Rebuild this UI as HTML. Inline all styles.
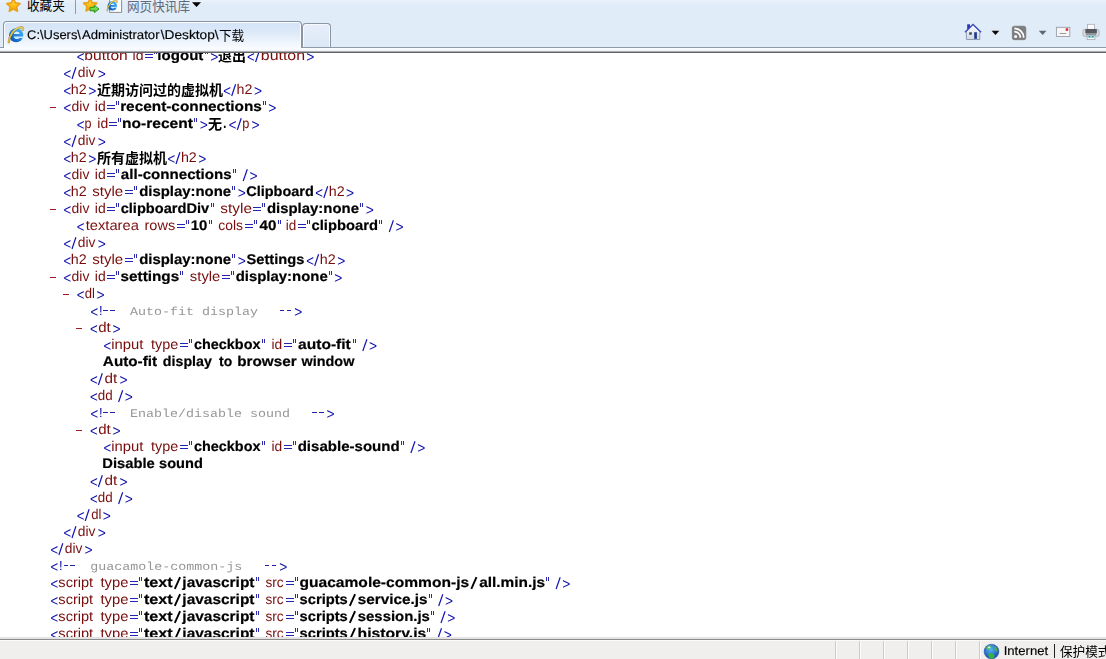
<!DOCTYPE html>
<html lang="zh"><head><meta charset="utf-8"><title>XML view</title>
<style>
html,body{margin:0;padding:0}
html{overflow:hidden;width:1106px;height:659px}
body{width:1106px;height:659px;overflow:hidden;background:#fff;position:relative;font-family:"Liberation Sans",sans-serif}
#top{position:absolute;left:0;top:0;width:1106px;height:47px;background:linear-gradient(#eaf1fb 0,#e3edf9 3px,#e0ecf8 5px,#e0ecf8 100%)}
#l47{position:absolute;left:0;top:47px;width:1106px;height:1px;background:#8f9aaa}
#band{position:absolute;left:0;top:48px;width:1106px;height:3px;background:linear-gradient(#fbfdff,#f1f5fa)}
#l51{position:absolute;left:0;top:51px;width:1106px;height:1px;background:#a9abae}
#l52{position:absolute;left:0;top:52px;width:1106px;height:1px;background:#636465}
#tab{position:absolute;left:3px;top:21px;width:297px;height:26px;border:1px solid #8a94a2;border-bottom:0;border-radius:4px 4px 0 0;
 background:linear-gradient(#d3e3f8 0,#dde9f9 40%,#f2f7fd 85%,#f8fbff 100%);box-shadow:inset 1px 1px 0 #fafdff,inset -1px 0 0 #fafdff}
#ntab{position:absolute;left:302px;top:23px;width:27px;height:23px;border:1px solid #8d96a3;border-bottom:0;border-radius:4px 4px 0 0;
 background:linear-gradient(#e6eefa,#dce8f6);box-shadow:inset 1px 1px 0 #f6faff,inset -1px 0 0 #f6faff}
.sep{position:absolute;left:75px;top:0;width:1px;height:14px;background:#8f9bab}
#view{position:absolute;left:0;top:53px;width:1106px;height:584px;overflow:hidden;background:#fff}
#doc{position:absolute;left:0;top:-53px;width:1106px;height:700px}
.ln{will-change:transform;position:absolute;left:0;width:1106px;height:17px;line-height:17px;font-size:14px;white-space:pre}
.k{text-rendering:geometricPrecision;position:absolute;top:0;left:0;transform-origin:0 0;white-space:pre;line-height:17px}
.m{color:#0a0aa8;font-size:15.5px;top:2.00px}
.t{color:#780c0c;top:0.00px}
.b{color:#000;font-weight:bold;-webkit-text-stroke:0.2px #000;top:0.00px}
.c{color:#969696;font-family:"Liberation Mono",monospace;font-size:13.33px;top:2px;transform:scaleY(0.87);transform-origin:0 13px}
.eq{position:absolute;top:7px;width:8px;height:1px;background:#2222b4}
.e2{top:10px}
.qt{position:absolute;top:3px;width:1px;height:4px;background:#2828a8}
.x{top:0!important;font-size:13px!important}
.ds{position:absolute;top:8px;width:4.9px;height:1px;background:#2020a8}
.ui{color:#000;font-size:12.6px;-webkit-text-stroke:0.15px #000}
.mn{position:absolute;top:9px;width:6px;height:1px;background:#a0182c}
.g{position:absolute;overflow:visible}
#status{position:absolute;left:0;top:637px;width:1106px;height:22px;background:#f0efee}
#status .r1{position:absolute;left:0;top:0;width:100%;height:2px;background:#e3e3e3}
#status .r2{position:absolute;left:0;top:2px;width:100%;height:1px;background:#8b8b8b}
#status .r3{position:absolute;left:0;top:3px;width:100%;height:1px;background:#fbfbfb}
.dv{position:absolute;top:4px;width:1px;height:18px;background:#cbcbcb;box-shadow:1px 0 0 #fcfcfc}
.abs{position:absolute}
.cj{font-family:"Liberation Sans","Noto Sans CJK SC",sans-serif}
</style></head>
<body>
<div id="top"></div>
<div id="l47"></div><div id="band"></div><div id="l51"></div><div id="l52"></div>
<div class="sep"></div>
<svg width="0" height="0" style="position:absolute"><defs>
<linearGradient id="gStar" x1="0" y1="0" x2="0" y2="1"><stop offset="0" stop-color="#ffe45a"/><stop offset=".5" stop-color="#ffc21a"/><stop offset="1" stop-color="#f39a00"/></linearGradient>
<linearGradient id="gIE" x1="1" y1="0" x2="0" y2="1"><stop offset="0" stop-color="#4fc0ff"/><stop offset=".5" stop-color="#1f86e0"/><stop offset="1" stop-color="#0b3f9a"/></linearGradient>
<linearGradient id="gGold" x1="0" y1="1" x2="1" y2="0"><stop offset="0" stop-color="#e9a820"/><stop offset=".6" stop-color="#f3d24a"/><stop offset="1" stop-color="#d9c25a"/></linearGradient>
<radialGradient id="gGlobe" cx=".45" cy=".35" r=".7"><stop offset="0" stop-color="#58b6f2"/><stop offset=".6" stop-color="#2a6fd0"/><stop offset="1" stop-color="#1b3f9c"/></radialGradient>
<linearGradient id="gGreen" x1="0" y1="0" x2="0" y2="1"><stop offset="0" stop-color="#a8f070"/><stop offset="1" stop-color="#3fbf2a"/></linearGradient>
<linearGradient id="gWall" x1="0" y1="0" x2="0" y2="1"><stop offset="0" stop-color="#fdfdfe"/><stop offset="1" stop-color="#cfd6e4"/></linearGradient>
</defs></svg><svg class="g" style="left:0;top:0" width="210" height="20" viewBox="0 0 210 20"><polygon points="13.40,-1.20 15.40,2.95 19.96,3.57 16.63,6.75 17.46,11.28 13.40,9.10 9.34,11.28 10.17,6.75 6.84,3.57 11.40,2.95" fill="url(#gStar)" stroke="#eaa21a" stroke-width="1.7" stroke-linejoin="round"/><polygon points="90.20,-1.60 92.20,2.55 96.76,3.17 93.43,6.35 94.26,10.88 90.20,8.70 86.14,10.88 86.97,6.35 83.64,3.17 88.20,2.55" fill="url(#gStar)" stroke="#eaa21a" stroke-width="1.7" stroke-linejoin="round"/><path d="M90 7.4H94.4V5.4L99 9L94.4 12.6V10.8H90Z" fill="url(#gGreen)" stroke="#2a9a1a" stroke-width="1" stroke-linejoin="round"/><path d="M109.6 -3H118.5L121.6 0.4V12.4H109.6Z" fill="#fdfdfd" stroke="#8c8c8c" stroke-width="1"/><circle cx="112.3" cy="5.9" r="4.7" fill="url(#gIE)"/><path d="M110.69 5.09 C110.96 2.95 114.31 2.81 114.58 5.09Z" fill="#d8efff"/><path d="M110.55 6.71 L117.27 6.71 L117.13 7.71 L114.58 7.78 C113.64 8.85 111.09 8.72 110.55 6.71Z" fill="#cfeaff"/><path d="M107.33 10.60 C107.33 7.11 110.55 1.07 115.52 0.53 C116.66 0.46 117.20 1.33 116.66 2.34" fill="none" stroke="#6b5a14" stroke-width="1.68" stroke-linecap="round" opacity=".45"/><path d="M107.33 10.60 C107.33 7.11 110.55 1.07 115.52 0.53 C116.66 0.46 117.20 1.33 116.66 2.34" fill="none" stroke="url(#gGold)" stroke-width="1.07" stroke-linecap="round"/><path d="M192 2.2H201L196.5 6.9Z" fill="#000"/></svg>
<svg class="g " style="left:26.60px;top:-3.10px" width="38" height="17" viewBox="0 -12.6 38 17"><text class="cj" x="0" y="0" font-size="12.6" fill="#000">收藏夹</text></svg>
<svg class="g " style="left:126.60px;top:-2.40px" width="62" height="17" viewBox="0 -12.6 62 17"><text class="cj" x="0" y="0" font-size="12.6" fill="#5f6a7a">网页快讯库</text></svg>
<div id="tab"></div>
<div id="ntab"></div>
<svg class="g" style="left:0;top:20px" width="30" height="30" viewBox="0 20 30 30"><circle cx="16.2" cy="35.2" r="7.0" fill="url(#gIE)"/><path d="M13.80 34.00 C14.20 30.80 19.20 30.60 19.60 34.00Z" fill="#d8efff"/><path d="M13.60 36.40 L23.60 36.40 L23.40 37.90 L19.60 38.00 C18.20 39.60 14.40 39.40 13.60 36.40Z" fill="#cfeaff"/><path d="M8.80 42.20 C8.80 37.00 13.60 28.00 21.00 27.20 C22.70 27.10 23.50 28.40 22.70 29.90" fill="none" stroke="#6b5a14" stroke-width="2.50" stroke-linecap="round" opacity=".45"/><path d="M8.80 42.20 C8.80 37.00 13.60 28.00 21.00 27.20 C22.70 27.10 23.50 28.40 22.70 29.90" fill="none" stroke="url(#gGold)" stroke-width="1.60" stroke-linecap="round"/></svg>
<div class="ln" style="top:26.6px;line-height:17px"><span class="k ui" style="transform:matrix(1.0259,0,0,1,27.09,0)">C:\Users\</span><span class="k ui" style="transform:matrix(1.0464,0,0,1,81.90,0)">Administrator</span><span class="k ui" style="transform:matrix(1.0889,0,0,1,160.70,0)">\Desktop\</span></div>
<svg class="g " style="left:218.90px;top:27.10px" width="26" height="17" viewBox="0 -12.6 26 17"><text class="cj" x="0" y="0" font-size="12.6" fill="#000">下载</text></svg>
<svg class="g" style="left:960px;top:20px" width="146" height="26" viewBox="960 20 146 26"><rect x="967.2" y="24.3" width="2.8" height="5" fill="#2b35b8"/><path d="M966.4 31.6L973 25.2L979.8 31.6V39.5H966.4Z" fill="url(#gWall)" stroke="#8a93a8" stroke-width="0.9"/><path d="M964.9 32.2L973 24.4L981.1 32.2" fill="none" stroke="#3a49c4" stroke-width="1.3" stroke-linejoin="miter"/><rect x="974.2" y="32.2" width="2.7" height="6.6" fill="#1f3a8a"/><rect x="969.2" y="32.3" width="2.6" height="2.4" fill="#3a4250"/><path d="M991.6 30.8H999.3L995.45 34.9Z" fill="#0a0a0a"/><rect x="1012.3" y="26.2" width="13.5" height="13.5" rx="2" fill="#7d7d7d" stroke="#6a6a6a" stroke-width="0.6"/><circle cx="1015.6" cy="36.5" r="1.5" fill="#fff"/><path d="M1014.3 31.6A6 6 0 0 1 1020.4 37.8" fill="none" stroke="#fff" stroke-width="1.7"/><path d="M1014.3 28.3A9.4 9.4 0 0 1 1023.7 37.8" fill="none" stroke="#fff" stroke-width="1.7"/><path d="M1038.8 30.8H1046.5L1042.65 35Z" fill="#5d6875"/><rect x="1056.4" y="27.3" width="13.4" height="9.2" fill="#f6f6f8" stroke="#9a9da6" stroke-width="0.9"/><rect x="1059.6" y="33" width="6.6" height="1" fill="#9a9a9a"/><rect x="1065.7" y="28.3" width="2.5" height="2.5" fill="#e0203a"/><rect x="1087.5" y="24.3" width="7.1" height="5.5" fill="#fbfbfd" stroke="#a9acb5" stroke-width="0.8"/><rect x="1083" y="29.4" width="16.1" height="7" rx="1.6" fill="#d9dce2" stroke="#9da1aa" stroke-width="0.7"/><rect x="1085.3" y="29" width="11.6" height="4.6" rx="0.8" fill="#55585e"/><rect x="1086" y="33.4" width="10.2" height="2" fill="#8d9096"/><rect x="1087.2" y="35.2" width="7.7" height="4.4" fill="#fbfbfd" stroke="#a9acb5" stroke-width="0.8"/><rect x="1088.4" y="35.8" width="5.3" height="1.8" fill="#1e9a94"/><rect x="1090.5" y="35.8" width="1.1" height="1.8" fill="#e8fbfa"/></svg>
<div id="view"><div id="doc">
<div class="ln" style="top:47.00px"><span class="k m" style="transform:matrix(0.8516,0,0,1,76.78,0)">&lt;</span><span class="k t" style="transform:matrix(1.1164,0,0,1,84.32,0)">button</span><span class="k t" style="transform:matrix(1.0070,0,0,1,132.52,0)">id</span><i class="eq" style="left:145px"></i><i class="eq e2" style="left:145px"></i><i class="qt" style="left:154px"></i><i class="qt" style="left:156px"></i><span class="k b" style="transform:matrix(1.0762,0,0,1,157.36,0)">logout</span><i class="qt" style="left:205px"></i><i class="qt" style="left:207px"></i><span class="k m" style="transform:matrix(0.8903,0,0,1,210.25,0)">&gt;</span><svg class="g " style="left:218.40px;top:-0.15px" width="30" height="18" viewBox="0 -13.9 30 18"><text class="cj" x="0" y="0" font-size="14" font-weight="bold" fill="#000">退出</text></svg><span class="k m" style="transform:matrix(0.8516,0,0,1,247.08,0)">&lt;</span><svg class="g" style="left:0;top:0" width="600" height="17"><line x1="255.6" y1="15" x2="259.5" y2="3.2" stroke="#1414b0" stroke-width="1.2"/></svg><span class="k t" style="transform:matrix(1.1379,0,0,1,260.80,0)">button</span><span class="k m" style="transform:matrix(0.8903,0,0,1,306.35,0)">&gt;</span></div>
<div class="ln" style="top:64.00px"><span class="k m" style="transform:matrix(0.8516,0,0,1,63.48,0)">&lt;</span><svg class="g" style="left:0;top:0" width="600" height="17"><line x1="72.0" y1="15" x2="75.9" y2="3.2" stroke="#1414b0" stroke-width="1.2"/></svg><span class="k t" style="transform:matrix(0.9852,0,0,1,77.87,0)">div</span><span class="k m" style="transform:matrix(0.8903,0,0,1,97.65,0)">&gt;</span></div>
<div class="ln" style="top:81.00px"><span class="k m" style="transform:matrix(0.8516,0,0,1,63.48,0)">&lt;</span><span class="k t" style="transform:matrix(1.0191,0,0,1,70.81,0)">h2</span><span class="k m" style="transform:matrix(0.8903,0,0,1,88.15,0)">&gt;</span><svg class="g " style="left:96.70px;top:-0.15px" width="128" height="18" viewBox="0 -13.9 128 18"><text class="cj" x="0" y="0" font-size="14" font-weight="bold" fill="#000">近期访问过的虚拟机</text></svg><span class="k m" style="transform:matrix(0.8516,0,0,1,223.18,0)">&lt;</span><svg class="g" style="left:0;top:0" width="600" height="17"><line x1="231.7" y1="15" x2="235.6" y2="3.2" stroke="#1414b0" stroke-width="1.2"/></svg><span class="k t" style="transform:matrix(1.0191,0,0,1,236.61,0)">h2</span><span class="k m" style="transform:matrix(0.8903,0,0,1,253.95,0)">&gt;</span></div>
<div class="ln" style="top:98.00px"><i class="mn" style="left:50px"></i><span class="k m" style="transform:matrix(0.8516,0,0,1,63.48,0)">&lt;</span><span class="k t" style="transform:matrix(0.9966,0,0,1,71.56,0)">div</span><span class="k t" style="transform:matrix(0.9962,0,0,1,94.83,0)">id</span><i class="eq" style="left:107px"></i><i class="eq e2" style="left:107px"></i><i class="qt" style="left:116px"></i><i class="qt" style="left:118px"></i><span class="k b" style="transform:matrix(1.0971,0,0,1,120.14,0)">recent-connections</span><i class="qt" style="left:263px"></i><i class="qt" style="left:265px"></i><span class="k m" style="transform:matrix(0.8903,0,0,1,268.25,0)">&gt;</span></div>
<div class="ln" style="top:115.00px"><span class="k m" style="transform:matrix(0.8516,0,0,1,76.68,0)">&lt;</span><span class="k t" style="transform:matrix(0.8985,0,0,1,84.41,0)">p</span><span class="k t" style="transform:matrix(0.9962,0,0,1,97.33,0)">id</span><i class="eq" style="left:109px"></i><i class="eq e2" style="left:109px"></i><i class="qt" style="left:118px"></i><i class="qt" style="left:120px"></i><span class="k b" style="transform:matrix(1.1107,0,0,1,122.03,0)">no-recent</span><i class="qt" style="left:194px"></i><i class="qt" style="left:196px"></i><span class="k m" style="transform:matrix(0.8903,0,0,1,199.75,0)">&gt;</span><svg class="g " style="left:208.40px;top:-0.15px" width="16" height="18" viewBox="0 -13.9 16 18"><text class="cj" x="0" y="0" font-size="14" font-weight="bold" fill="#000">无</text></svg><span class="k b" style="transform:matrix(0.7771,0,0,1,223.22,0)">.</span><span class="k m" style="transform:matrix(0.8516,0,0,1,228.78,0)">&lt;</span><svg class="g" style="left:0;top:0" width="600" height="17"><line x1="237.3" y1="15" x2="241.2" y2="3.2" stroke="#1414b0" stroke-width="1.2"/></svg><span class="k t" style="transform:matrix(0.9143,0,0,1,242.30,0)">p</span><span class="k m" style="transform:matrix(0.8903,0,0,1,251.55,0)">&gt;</span></div>
<div class="ln" style="top:132.00px"><span class="k m" style="transform:matrix(0.8516,0,0,1,63.48,0)">&lt;</span><svg class="g" style="left:0;top:0" width="600" height="17"><line x1="72.0" y1="15" x2="75.9" y2="3.2" stroke="#1414b0" stroke-width="1.2"/></svg><span class="k t" style="transform:matrix(0.9852,0,0,1,77.87,0)">div</span><span class="k m" style="transform:matrix(0.8903,0,0,1,97.65,0)">&gt;</span></div>
<div class="ln" style="top:149.00px"><span class="k m" style="transform:matrix(0.8516,0,0,1,63.48,0)">&lt;</span><span class="k t" style="transform:matrix(1.0191,0,0,1,70.81,0)">h2</span><span class="k m" style="transform:matrix(0.8903,0,0,1,88.15,0)">&gt;</span><svg class="g " style="left:96.70px;top:-0.15px" width="72" height="18" viewBox="0 -13.9 72 18"><text class="cj" x="0" y="0" font-size="14" font-weight="bold" fill="#000">所有虚拟机</text></svg><span class="k m" style="transform:matrix(0.8516,0,0,1,167.48,0)">&lt;</span><svg class="g" style="left:0;top:0" width="600" height="17"><line x1="176.0" y1="15" x2="179.9" y2="3.2" stroke="#1414b0" stroke-width="1.2"/></svg><span class="k t" style="transform:matrix(1.0191,0,0,1,180.91,0)">h2</span><span class="k m" style="transform:matrix(0.8903,0,0,1,198.25,0)">&gt;</span></div>
<div class="ln" style="top:166.00px"><span class="k m" style="transform:matrix(0.8516,0,0,1,63.48,0)">&lt;</span><span class="k t" style="transform:matrix(0.9966,0,0,1,71.56,0)">div</span><span class="k t" style="transform:matrix(0.9962,0,0,1,94.83,0)">id</span><i class="eq" style="left:107px"></i><i class="eq e2" style="left:107px"></i><i class="qt" style="left:116px"></i><i class="qt" style="left:118px"></i><span class="k b" style="transform:matrix(1.0785,0,0,1,120.86,0)">all-connections</span><i class="qt" style="left:233px"></i><i class="qt" style="left:235px"></i><svg class="g" style="left:0;top:0" width="600" height="17"><line x1="243.2" y1="15" x2="247.3" y2="3.2" stroke="#1414b0" stroke-width="1.2"/></svg><span class="k m" style="transform:matrix(0.8903,0,0,1,249.45,0)">&gt;</span></div>
<div class="ln" style="top:183.00px"><span class="k m" style="transform:matrix(0.8516,0,0,1,63.48,0)">&lt;</span><span class="k t" style="transform:matrix(1.0191,0,0,1,70.81,0)">h2</span><span class="k t" style="transform:matrix(1.0750,0,0,1,92.26,0)">style</span><i class="eq" style="left:125px"></i><i class="eq e2" style="left:125px"></i><i class="qt" style="left:134px"></i><i class="qt" style="left:136px"></i><span class="k b" style="transform:matrix(1.0648,0,0,1,139.13,0)">display:none</span><i class="qt" style="left:232px"></i><i class="qt" style="left:234px"></i><span class="k m" style="transform:matrix(0.8903,0,0,1,237.85,0)">&gt;</span><span class="k b" style="transform:matrix(1.0328,0,0,1,246.25,0)">Clipboard</span><span class="k m" style="transform:matrix(0.8516,0,0,1,315.28,0)">&lt;</span><svg class="g" style="left:0;top:0" width="600" height="17"><line x1="323.8" y1="15" x2="327.7" y2="3.2" stroke="#1414b0" stroke-width="1.2"/></svg><span class="k t" style="transform:matrix(1.0191,0,0,1,328.81,0)">h2</span><span class="k m" style="transform:matrix(0.8903,0,0,1,346.05,0)">&gt;</span></div>
<div class="ln" style="top:200.00px"><i class="mn" style="left:50px"></i><span class="k m" style="transform:matrix(0.8516,0,0,1,63.48,0)">&lt;</span><span class="k t" style="transform:matrix(0.9966,0,0,1,71.56,0)">div</span><span class="k t" style="transform:matrix(0.9962,0,0,1,94.83,0)">id</span><i class="eq" style="left:107px"></i><i class="eq e2" style="left:107px"></i><i class="qt" style="left:116px"></i><i class="qt" style="left:118px"></i><span class="k b" style="transform:matrix(1.0433,0,0,1,120.64,0)">clipboardDiv</span><i class="qt" style="left:211px"></i><i class="qt" style="left:213px"></i><span class="k t" style="transform:matrix(1.0964,0,0,1,220.36,0)">style</span><i class="eq" style="left:253px"></i><i class="eq e2" style="left:253px"></i><i class="qt" style="left:262px"></i><i class="qt" style="left:264px"></i><span class="k b" style="transform:matrix(1.0659,0,0,1,266.93,0)">display:none</span><i class="qt" style="left:360px"></i><i class="qt" style="left:362px"></i><span class="k m" style="transform:matrix(0.8903,0,0,1,365.65,0)">&gt;</span></div>
<div class="ln" style="top:217.00px"><span class="k m" style="transform:matrix(0.8516,0,0,1,76.68,0)">&lt;</span><span class="k t" style="transform:matrix(1.0498,0,0,1,85.70,0)">textarea</span><span class="k t" style="transform:matrix(1.0373,0,0,1,144.49,0)">rows</span><i class="eq" style="left:177px"></i><i class="eq e2" style="left:177px"></i><i class="qt" style="left:186px"></i><i class="qt" style="left:188px"></i><span class="k b" style="transform:matrix(1.0687,0,0,1,190.76,0)">10</span><i class="qt" style="left:209px"></i><i class="qt" style="left:211px"></i><span class="k t" style="transform:matrix(0.9908,0,0,1,218.37,0)">cols</span><i class="eq" style="left:245px"></i><i class="eq e2" style="left:245px"></i><i class="qt" style="left:254px"></i><i class="qt" style="left:256px"></i><span class="k b" style="transform:matrix(1.0796,0,0,1,259.50,0)">40</span><i class="qt" style="left:278px"></i><i class="qt" style="left:280px"></i><span class="k t" style="transform:matrix(0.9637,0,0,1,285.86,0)">id</span><i class="eq" style="left:298px"></i><i class="eq e2" style="left:298px"></i><i class="qt" style="left:307px"></i><i class="qt" style="left:309px"></i><span class="k b" style="transform:matrix(1.0539,0,0,1,311.54,0)">clipboard</span><i class="qt" style="left:379px"></i><i class="qt" style="left:381px"></i><svg class="g" style="left:0;top:0" width="600" height="17"><line x1="389.3" y1="15" x2="393.4" y2="3.2" stroke="#1414b0" stroke-width="1.2"/></svg><span class="k m" style="transform:matrix(0.8903,0,0,1,395.55,0)">&gt;</span></div>
<div class="ln" style="top:234.00px"><span class="k m" style="transform:matrix(0.8516,0,0,1,63.48,0)">&lt;</span><svg class="g" style="left:0;top:0" width="600" height="17"><line x1="72.0" y1="15" x2="75.9" y2="3.2" stroke="#1414b0" stroke-width="1.2"/></svg><span class="k t" style="transform:matrix(0.9852,0,0,1,77.87,0)">div</span><span class="k m" style="transform:matrix(0.8903,0,0,1,97.65,0)">&gt;</span></div>
<div class="ln" style="top:251.00px"><span class="k m" style="transform:matrix(0.8516,0,0,1,63.48,0)">&lt;</span><span class="k t" style="transform:matrix(1.0191,0,0,1,70.81,0)">h2</span><span class="k t" style="transform:matrix(1.0750,0,0,1,92.26,0)">style</span><i class="eq" style="left:125px"></i><i class="eq e2" style="left:125px"></i><i class="qt" style="left:134px"></i><i class="qt" style="left:136px"></i><span class="k b" style="transform:matrix(1.0648,0,0,1,139.13,0)">display:none</span><i class="qt" style="left:232px"></i><i class="qt" style="left:234px"></i><span class="k m" style="transform:matrix(0.8903,0,0,1,237.85,0)">&gt;</span><span class="k b" style="transform:matrix(1.0470,0,0,1,246.47,0)">Settings</span><span class="k m" style="transform:matrix(0.8516,0,0,1,306.18,0)">&lt;</span><svg class="g" style="left:0;top:0" width="600" height="17"><line x1="314.7" y1="15" x2="318.6" y2="3.2" stroke="#1414b0" stroke-width="1.2"/></svg><span class="k t" style="transform:matrix(1.0191,0,0,1,319.71,0)">h2</span><span class="k m" style="transform:matrix(0.8903,0,0,1,337.15,0)">&gt;</span></div>
<div class="ln" style="top:268.00px"><i class="mn" style="left:50px"></i><span class="k m" style="transform:matrix(0.8516,0,0,1,63.48,0)">&lt;</span><span class="k t" style="transform:matrix(0.9966,0,0,1,71.56,0)">div</span><span class="k t" style="transform:matrix(0.9962,0,0,1,94.83,0)">id</span><i class="eq" style="left:107px"></i><i class="eq e2" style="left:107px"></i><i class="qt" style="left:116px"></i><i class="qt" style="left:118px"></i><span class="k b" style="transform:matrix(1.0936,0,0,1,120.52,0)">settings</span><i class="qt" style="left:180px"></i><i class="qt" style="left:182px"></i><span class="k t" style="transform:matrix(1.0571,0,0,1,189.87,0)">style</span><i class="eq" style="left:222px"></i><i class="eq e2" style="left:222px"></i><i class="qt" style="left:231px"></i><i class="qt" style="left:233px"></i><span class="k b" style="transform:matrix(1.0648,0,0,1,235.73,0)">display:none</span><i class="qt" style="left:329px"></i><i class="qt" style="left:331px"></i><span class="k m" style="transform:matrix(0.8903,0,0,1,334.35,0)">&gt;</span></div>
<div class="ln" style="top:285.00px"><i class="mn" style="left:63px"></i><span class="k m" style="transform:matrix(0.8516,0,0,1,76.68,0)">&lt;</span><span class="k t" style="transform:matrix(0.9333,0,0,1,84.79,0)">dl</span><span class="k m" style="transform:matrix(0.8903,0,0,1,96.45,0)">&gt;</span></div>
<div class="ln" style="top:302.00px"><span class="k m" style="transform:matrix(0.8516,0,0,1,90.38,0)">&lt;</span><span class="k m x" style="transform:translateX(98.9px)">!</span><i class="ds" style="left:103.3px"></i><i class="ds" style="left:110.2px"></i><span class="k c" style="transform:matrix(1,0,0,.87,130.00,0)">Auto-fit display</span><i class="ds" style="left:279.6px"></i><i class="ds" style="left:286.5px"></i><span class="k m" style="transform:matrix(0.8903,0,0,1,294.35,0)">&gt;</span></div>
<div class="ln" style="top:319.00px"><i class="mn" style="left:76px"></i><span class="k m" style="transform:matrix(0.8516,0,0,1,89.88,0)">&lt;</span><span class="k t" style="transform:matrix(1.0721,0,0,1,98.13,0)">dt</span><span class="k m" style="transform:matrix(0.8903,0,0,1,112.55,0)">&gt;</span></div>
<div class="ln" style="top:336.00px"><span class="k m" style="transform:matrix(0.8516,0,0,1,103.58,0)">&lt;</span><span class="k t" style="transform:matrix(1.0599,0,0,1,111.27,0)">input</span><span class="k t" style="transform:matrix(1.0311,0,0,1,150.90,0)">type</span><i class="eq" style="left:180px"></i><i class="eq e2" style="left:180px"></i><i class="qt" style="left:189px"></i><i class="qt" style="left:191px"></i><span class="k b" style="transform:matrix(1.0306,0,0,1,193.95,0)">checkbox</span><i class="qt" style="left:262px"></i><i class="qt" style="left:264px"></i><span class="k t" style="transform:matrix(0.9853,0,0,1,271.44,0)">id</span><i class="eq" style="left:284px"></i><i class="eq e2" style="left:284px"></i><i class="qt" style="left:293px"></i><i class="qt" style="left:295px"></i><span class="k b" style="transform:matrix(1.1116,0,0,1,298.06,0)">auto-fit</span><i class="qt" style="left:353px"></i><i class="qt" style="left:355px"></i><svg class="g" style="left:0;top:0" width="600" height="17"><line x1="362.8" y1="15" x2="366.9" y2="3.2" stroke="#1414b0" stroke-width="1.2"/></svg><span class="k m" style="transform:matrix(0.8903,0,0,1,369.05,0)">&gt;</span></div>
<div class="ln" style="top:353.00px"><span class="k b" style="transform:matrix(1.0897,0,0,1,102.86,0)">Auto-fit</span><span class="k b" style="transform:matrix(1.0148,0,0,1,162.86,0)">display</span><span class="k b" style="transform:matrix(0.9956,0,0,1,219.10,0)">to</span><span class="k b" style="transform:matrix(1.0920,0,0,1,237.14,0)">browser</span><span class="k b" style="transform:matrix(1.0293,0,0,1,301.53,0)">window</span></div>
<div class="ln" style="top:370.00px"><span class="k m" style="transform:matrix(0.8516,0,0,1,89.88,0)">&lt;</span><svg class="g" style="left:0;top:0" width="600" height="17"><line x1="98.4" y1="15" x2="102.3" y2="3.2" stroke="#1414b0" stroke-width="1.2"/></svg><span class="k t" style="transform:matrix(1.0898,0,0,1,104.42,0)">dt</span><span class="k m" style="transform:matrix(0.8903,0,0,1,119.45,0)">&gt;</span></div>
<div class="ln" style="top:387.00px"><span class="k m" style="transform:matrix(0.8516,0,0,1,89.88,0)">&lt;</span><span class="k t" style="transform:matrix(0.9548,0,0,1,97.78,0)">dd</span><svg class="g" style="left:0;top:0" width="600" height="17"><line x1="118.6" y1="15" x2="122.7" y2="3.2" stroke="#1414b0" stroke-width="1.2"/></svg><span class="k m" style="transform:matrix(0.8903,0,0,1,124.85,0)">&gt;</span></div>
<div class="ln" style="top:404.00px"><span class="k m" style="transform:matrix(0.8516,0,0,1,90.38,0)">&lt;</span><span class="k m x" style="transform:translateX(98.9px)">!</span><i class="ds" style="left:103.3px"></i><i class="ds" style="left:110.2px"></i><span class="k c" style="transform:matrix(1,0,0,.87,130.00,0)">Enable/disable sound</span><i class="ds" style="left:311.8px"></i><i class="ds" style="left:318.7px"></i><span class="k m" style="transform:matrix(0.8903,0,0,1,326.55,0)">&gt;</span></div>
<div class="ln" style="top:421.00px"><i class="mn" style="left:76px"></i><span class="k m" style="transform:matrix(0.8516,0,0,1,89.88,0)">&lt;</span><span class="k t" style="transform:matrix(1.0721,0,0,1,98.13,0)">dt</span><span class="k m" style="transform:matrix(0.8903,0,0,1,112.55,0)">&gt;</span></div>
<div class="ln" style="top:438.00px"><span class="k m" style="transform:matrix(0.8516,0,0,1,103.58,0)">&lt;</span><span class="k t" style="transform:matrix(1.0599,0,0,1,111.27,0)">input</span><span class="k t" style="transform:matrix(1.0311,0,0,1,150.90,0)">type</span><i class="eq" style="left:180px"></i><i class="eq e2" style="left:180px"></i><i class="qt" style="left:189px"></i><i class="qt" style="left:191px"></i><span class="k b" style="transform:matrix(1.0306,0,0,1,193.95,0)">checkbox</span><i class="qt" style="left:262px"></i><i class="qt" style="left:264px"></i><span class="k t" style="transform:matrix(0.9853,0,0,1,271.44,0)">id</span><i class="eq" style="left:284px"></i><i class="eq e2" style="left:284px"></i><i class="qt" style="left:293px"></i><i class="qt" style="left:295px"></i><span class="k b" style="transform:matrix(1.0752,0,0,1,297.63,0)">disable-sound</span><i class="qt" style="left:401px"></i><i class="qt" style="left:403px"></i><svg class="g" style="left:0;top:0" width="600" height="17"><line x1="410.9" y1="15" x2="415.0" y2="3.2" stroke="#1414b0" stroke-width="1.2"/></svg><span class="k m" style="transform:matrix(0.8903,0,0,1,417.15,0)">&gt;</span></div>
<div class="ln" style="top:455.00px"><span class="k b" style="transform:matrix(1.0520,0,0,1,102.28,0)">Disable</span><span class="k b" style="transform:matrix(1.0428,0,0,1,159.04,0)">sound</span></div>
<div class="ln" style="top:472.00px"><span class="k m" style="transform:matrix(0.8516,0,0,1,89.88,0)">&lt;</span><svg class="g" style="left:0;top:0" width="600" height="17"><line x1="98.4" y1="15" x2="102.3" y2="3.2" stroke="#1414b0" stroke-width="1.2"/></svg><span class="k t" style="transform:matrix(1.0898,0,0,1,104.42,0)">dt</span><span class="k m" style="transform:matrix(0.8903,0,0,1,119.45,0)">&gt;</span></div>
<div class="ln" style="top:489.00px"><span class="k m" style="transform:matrix(0.8516,0,0,1,89.88,0)">&lt;</span><span class="k t" style="transform:matrix(0.9548,0,0,1,97.78,0)">dd</span><svg class="g" style="left:0;top:0" width="600" height="17"><line x1="118.6" y1="15" x2="122.7" y2="3.2" stroke="#1414b0" stroke-width="1.2"/></svg><span class="k m" style="transform:matrix(0.8903,0,0,1,124.85,0)">&gt;</span></div>
<div class="ln" style="top:506.00px"><span class="k m" style="transform:matrix(0.8516,0,0,1,76.68,0)">&lt;</span><svg class="g" style="left:0;top:0" width="600" height="17"><line x1="85.2" y1="15" x2="89.1" y2="3.2" stroke="#1414b0" stroke-width="1.2"/></svg><span class="k t" style="transform:matrix(0.9333,0,0,1,91.19,0)">dl</span><span class="k m" style="transform:matrix(0.8903,0,0,1,102.85,0)">&gt;</span></div>
<div class="ln" style="top:523.00px"><span class="k m" style="transform:matrix(0.8516,0,0,1,63.48,0)">&lt;</span><svg class="g" style="left:0;top:0" width="600" height="17"><line x1="72.0" y1="15" x2="75.9" y2="3.2" stroke="#1414b0" stroke-width="1.2"/></svg><span class="k t" style="transform:matrix(0.9852,0,0,1,77.87,0)">div</span><span class="k m" style="transform:matrix(0.8903,0,0,1,97.65,0)">&gt;</span></div>
<div class="ln" style="top:540.00px"><span class="k m" style="transform:matrix(0.8516,0,0,1,50.38,0)">&lt;</span><svg class="g" style="left:0;top:0" width="600" height="17"><line x1="58.9" y1="15" x2="62.8" y2="3.2" stroke="#1414b0" stroke-width="1.2"/></svg><span class="k t" style="transform:matrix(0.9852,0,0,1,64.77,0)">div</span><span class="k m" style="transform:matrix(0.8903,0,0,1,84.55,0)">&gt;</span></div>
<div class="ln" style="top:557.00px"><span class="k m" style="transform:matrix(0.8516,0,0,1,50.58,0)">&lt;</span><span class="k m x" style="transform:translateX(59.1px)">!</span><i class="ds" style="left:63.5px"></i><i class="ds" style="left:70.4px"></i><span class="k c" style="transform:matrix(1,0,0,.87,90.20,0)">guacamole-common-js</span><i class="ds" style="left:264.6px"></i><i class="ds" style="left:271.5px"></i><span class="k m" style="transform:matrix(0.8903,0,0,1,279.35,0)">&gt;</span></div>
<div class="ln" style="top:574.00px"><span class="k m" style="transform:matrix(0.8516,0,0,1,50.38,0)">&lt;</span><span class="k t" style="transform:matrix(1.0397,0,0,1,58.37,0)">script</span><span class="k t" style="transform:matrix(1.0543,0,0,1,100.50,0)">type</span><i class="eq" style="left:130px"></i><i class="eq e2" style="left:130px"></i><i class="qt" style="left:139px"></i><i class="qt" style="left:141px"></i><span class="k b" style="transform:matrix(1.1519,0,0,1,143.90,0)">text</span><svg class="g" style="left:0;top:0" width="600" height="17"><line x1="174.8" y1="14.8" x2="180.1" y2="3.2" stroke="#000" stroke-width="1.9"/></svg><span class="k b" style="transform:matrix(1.1034,0,0,1,182.34,0)">javascript</span><i class="qt" style="left:256px"></i><i class="qt" style="left:258px"></i><span class="k t" style="transform:matrix(0.9712,0,0,1,265.49,0)">src</span><i class="eq" style="left:286px"></i><i class="eq e2" style="left:286px"></i><i class="qt" style="left:295px"></i><i class="qt" style="left:297px"></i><span class="k b" style="transform:matrix(1.1124,0,0,1,299.51,0)">guacamole-common-js</span><svg class="g" style="left:0;top:0" width="600" height="17"><line x1="471.3" y1="14.8" x2="476.5" y2="3.2" stroke="#000" stroke-width="1.9"/></svg><span class="k b" style="transform:matrix(1.0994,0,0,1,479.16,0)">all.min.js</span><i class="qt" style="left:546px"></i><i class="qt" style="left:548px"></i><svg class="g" style="left:0;top:0" width="600" height="17"><line x1="556.1" y1="15" x2="560.2" y2="3.2" stroke="#1414b0" stroke-width="1.2"/></svg><span class="k m" style="transform:matrix(0.8903,0,0,1,562.35,0)">&gt;</span></div>
<div class="ln" style="top:591.00px"><span class="k m" style="transform:matrix(0.8516,0,0,1,50.38,0)">&lt;</span><span class="k t" style="transform:matrix(1.0397,0,0,1,58.37,0)">script</span><span class="k t" style="transform:matrix(1.0543,0,0,1,100.50,0)">type</span><i class="eq" style="left:130px"></i><i class="eq e2" style="left:130px"></i><i class="qt" style="left:139px"></i><i class="qt" style="left:141px"></i><span class="k b" style="transform:matrix(1.1519,0,0,1,143.90,0)">text</span><svg class="g" style="left:0;top:0" width="600" height="17"><line x1="174.8" y1="14.8" x2="180.1" y2="3.2" stroke="#000" stroke-width="1.9"/></svg><span class="k b" style="transform:matrix(1.1034,0,0,1,182.34,0)">javascript</span><i class="qt" style="left:256px"></i><i class="qt" style="left:258px"></i><span class="k t" style="transform:matrix(0.9712,0,0,1,265.49,0)">src</span><i class="eq" style="left:286px"></i><i class="eq e2" style="left:286px"></i><i class="qt" style="left:295px"></i><i class="qt" style="left:297px"></i><span class="k b" style="transform:matrix(1.0511,0,0,1,299.54,0)">scripts</span><svg class="g" style="left:0;top:0" width="600" height="17"><line x1="349.8" y1="14.8" x2="355.1" y2="3.2" stroke="#000" stroke-width="1.9"/></svg><span class="k b" style="transform:matrix(1.0950,0,0,1,357.72,0)">service.js</span><i class="qt" style="left:429px"></i><i class="qt" style="left:431px"></i><svg class="g" style="left:0;top:0" width="600" height="17"><line x1="438.7" y1="15" x2="442.8" y2="3.2" stroke="#1414b0" stroke-width="1.2"/></svg><span class="k m" style="transform:matrix(0.8903,0,0,1,444.95,0)">&gt;</span></div>
<div class="ln" style="top:608.00px"><span class="k m" style="transform:matrix(0.8516,0,0,1,50.38,0)">&lt;</span><span class="k t" style="transform:matrix(1.0397,0,0,1,58.37,0)">script</span><span class="k t" style="transform:matrix(1.0543,0,0,1,100.50,0)">type</span><i class="eq" style="left:130px"></i><i class="eq e2" style="left:130px"></i><i class="qt" style="left:139px"></i><i class="qt" style="left:141px"></i><span class="k b" style="transform:matrix(1.1519,0,0,1,143.90,0)">text</span><svg class="g" style="left:0;top:0" width="600" height="17"><line x1="174.8" y1="14.8" x2="180.1" y2="3.2" stroke="#000" stroke-width="1.9"/></svg><span class="k b" style="transform:matrix(1.1034,0,0,1,182.34,0)">javascript</span><i class="qt" style="left:256px"></i><i class="qt" style="left:258px"></i><span class="k t" style="transform:matrix(0.9712,0,0,1,265.49,0)">src</span><i class="eq" style="left:286px"></i><i class="eq e2" style="left:286px"></i><i class="qt" style="left:295px"></i><i class="qt" style="left:297px"></i><span class="k b" style="transform:matrix(1.0511,0,0,1,299.54,0)">scripts</span><svg class="g" style="left:0;top:0" width="600" height="17"><line x1="349.8" y1="14.8" x2="355.1" y2="3.2" stroke="#000" stroke-width="1.9"/></svg><span class="k b" style="transform:matrix(1.0660,0,0,1,357.73,0)">session.js</span><i class="qt" style="left:431px"></i><i class="qt" style="left:433px"></i><svg class="g" style="left:0;top:0" width="600" height="17"><line x1="441.0" y1="15" x2="445.1" y2="3.2" stroke="#1414b0" stroke-width="1.2"/></svg><span class="k m" style="transform:matrix(0.8903,0,0,1,447.25,0)">&gt;</span></div>
<div class="ln" style="top:625.00px"><span class="k m" style="transform:matrix(0.8516,0,0,1,50.38,0)">&lt;</span><span class="k t" style="transform:matrix(1.0397,0,0,1,58.37,0)">script</span><span class="k t" style="transform:matrix(1.0543,0,0,1,100.50,0)">type</span><i class="eq" style="left:130px"></i><i class="eq e2" style="left:130px"></i><i class="qt" style="left:139px"></i><i class="qt" style="left:141px"></i><span class="k b" style="transform:matrix(1.1519,0,0,1,143.90,0)">text</span><svg class="g" style="left:0;top:0" width="600" height="17"><line x1="174.8" y1="14.8" x2="180.1" y2="3.2" stroke="#000" stroke-width="1.9"/></svg><span class="k b" style="transform:matrix(1.1034,0,0,1,182.34,0)">javascript</span><i class="qt" style="left:256px"></i><i class="qt" style="left:258px"></i><span class="k t" style="transform:matrix(0.9712,0,0,1,265.49,0)">src</span><i class="eq" style="left:286px"></i><i class="eq e2" style="left:286px"></i><i class="qt" style="left:295px"></i><i class="qt" style="left:297px"></i><span class="k b" style="transform:matrix(1.0511,0,0,1,299.54,0)">scripts</span><svg class="g" style="left:0;top:0" width="600" height="17"><line x1="349.8" y1="14.8" x2="355.1" y2="3.2" stroke="#000" stroke-width="1.9"/></svg><span class="k b" style="transform:matrix(1.1245,0,0,1,357.52,0)">history.js</span><i class="qt" style="left:427px"></i><i class="qt" style="left:429px"></i><svg class="g" style="left:0;top:0" width="600" height="17"><line x1="437.4" y1="15" x2="441.5" y2="3.2" stroke="#1414b0" stroke-width="1.2"/></svg><span class="k m" style="transform:matrix(0.8903,0,0,1,443.65,0)">&gt;</span></div>
</div></div>
<div id="status"><div class="r1"></div><div class="r2"></div><div class="r3"></div>
<div class="dv" style="left:835px"></div><div class="dv" style="left:859px"></div><div class="dv" style="left:883px"></div><div class="dv" style="left:907px"></div><div class="dv" style="left:931px"></div><div class="dv" style="left:955px"></div><div class="dv" style="left:979px"></div>
</div>
<svg class="g" style="left:980px;top:640px" width="24" height="19" viewBox="980 640 24 19"><circle cx="991.5" cy="651.6" r="7.4" fill="url(#gGlobe)" stroke="#274a9c" stroke-width="0.5"/><path d="M986.2 647.6C987.5 645.6 989.8 645 990.6 645.8C991.2 647 989.6 648 988.8 649.4C987.8 650.2 986.4 649.4 986.2 647.6Z" fill="#58c83a"/><path d="M994.4 646.6C996.4 647 997.6 649 997.4 651.2C996.4 652.2 994.8 651 994.6 649.4Z" fill="#49b838"/><path d="M988.6 653.4C990.6 652.4 993.6 653.6 994.6 655.8C994.4 657.8 992.2 659.4 990.6 658.6C989 657.4 987.6 655 988.6 653.4Z" fill="#35b540"/><ellipse cx="989.2" cy="647.4" rx="1.4" ry="0.9" fill="#e8fff0" opacity=".8"/></svg>
<div class="ln" style="top:642.8px"><span class="k ui" style="transform:matrix(1.0410,0,0,1,1003.68,0)">Internet</span></div>
<div class="abs" style="left:1054px;top:644px;width:1.2px;height:14px;background:#222"></div>
<svg class="g " style="left:1060.30px;top:643.00px" width="50" height="17" viewBox="0 -12.6 50 17"><text class="cj" x="0" y="0" font-size="12.6" fill="#000">保护模式</text></svg>
</body></html>
